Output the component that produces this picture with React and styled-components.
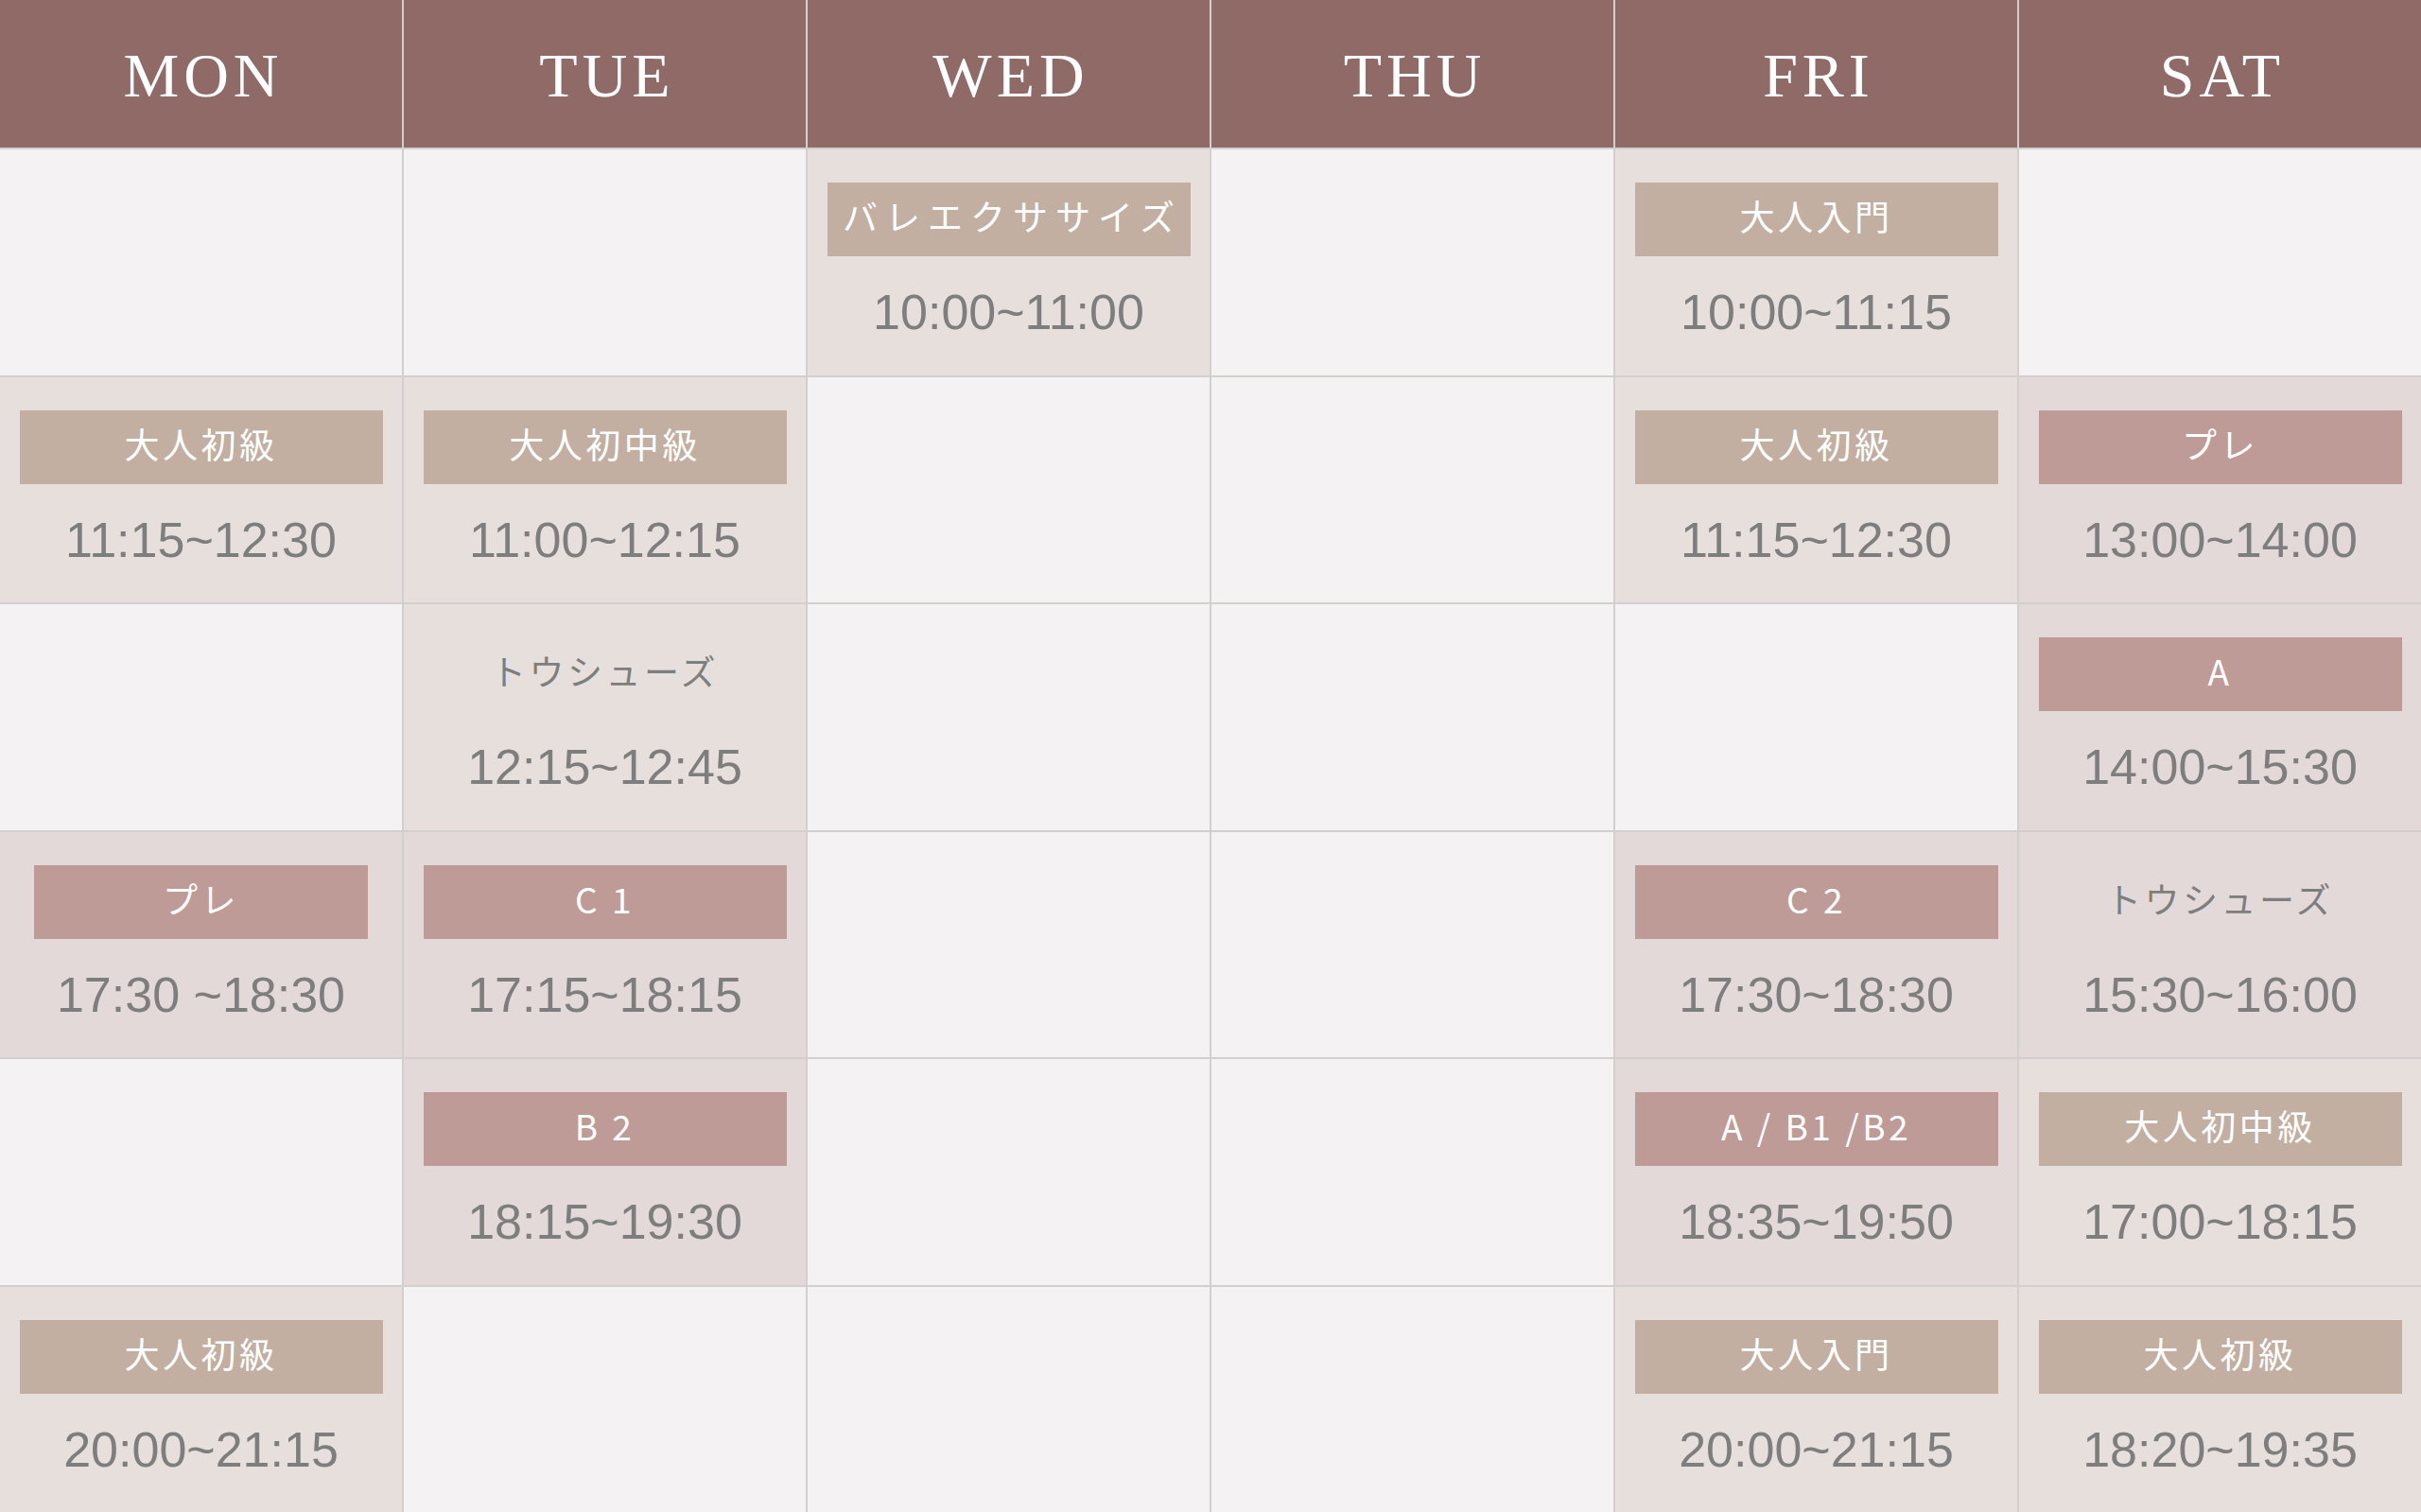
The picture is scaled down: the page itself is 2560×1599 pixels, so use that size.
import React from "react";
import styled, { createGlobalStyle, css } from "styled-components";

const GlobalStyle = createGlobalStyle`
  html, body {
    margin: 0;
    padding: 0;
    background: #f4f2f3;
    overflow: hidden;
  }
  * {
    box-sizing: border-box;
  }
`;

const colors = {
  header: "#8f6a67",
  line: "#d3cfcf",
  empty: "#f4f2f3",
  cellTan: "#e6dfdc",
  cellPink: "#e3d9d8",
  boxTan: "#c2afa1",
  boxPink: "#bf9b97",
  time: "#7e7e7e",
};

const Table = styled.div`
  width: 100vw;
  height: 100vh;
  display: grid;
  grid-template-columns: repeat(6, 1fr);
  grid-template-rows: 156px repeat(6, 1fr);
  gap: 2px;
  background: ${colors.line};
`;

const DayHead = styled.div`
  background: ${colors.header};
  color: #ffffff;
  display: flex;
  align-items: center;
  justify-content: center;
  font-family: "Liberation Serif", "Times New Roman", serif;
  font-size: 66px;
  letter-spacing: 5px;
  padding-left: 5px;
  padding-top: 4px;
`;

const Cell = styled.div`
  background: ${(p) =>
    p.$tone === "pink"
      ? colors.cellPink
      : p.$tone === "tan"
      ? colors.cellTan
      : colors.empty};
  display: flex;
  flex-direction: column;
  align-items: center;
  padding-top: 35px;
`;

const ClassBox = styled.div`
  width: ${(p) => (p.$narrow ? "353px" : "384px")};
  height: 78px;
  display: flex;
  align-items: center;
  justify-content: center;
  padding-bottom: 7px;
  background: ${(p) =>
    p.$tone === "pink" ? colors.boxPink : p.$tone === "tan" ? colors.boxTan : "transparent"};
  color: ${(p) => (p.$tone === "plain" ? colors.time : "#ffffff")};
  font-family: "Noto Sans CJK JP", "Noto Sans", sans-serif;
  font-weight: 400;
  font-size: 37px;
  letter-spacing: ${(p) => (p.$wide ? "8px" : "3.5px")};
  line-height: 1;
  ${(p) =>
    p.$wide &&
    css`
      padding-left: 8px;
    `}
`;

const Time = styled.div`
  margin-top: 33px;
  font-family: "Liberation Sans", Arial, sans-serif;
  font-size: 52px;
  line-height: 52px;
  color: ${colors.time};
  white-space: pre;
`;

const days = ["MON", "TUE", "WED", "THU", "FRI", "SAT"];

const rows = [
  [
    null,
    null,
    { label: "バレエクササイズ", tone: "tan", time: "10:00~11:00", wide: true },
    null,
    { label: "大人入門", tone: "tan", time: "10:00~11:15" },
    null,
  ],
  [
    { label: "大人初級", tone: "tan", time: "11:15~12:30" },
    { label: "大人初中級", tone: "tan", time: "11:00~12:15" },
    null,
    null,
    { label: "大人初級", tone: "tan", time: "11:15~12:30" },
    { label: "プレ", tone: "pink", time: "13:00~14:00" },
  ],
  [
    null,
    { label: "トウシューズ", tone: "plain", bg: "tan", time: "12:15~12:45" },
    null,
    null,
    null,
    { label: "A", tone: "pink", time: "14:00~15:30" },
  ],
  [
    { label: "プレ", tone: "pink", time: "17:30 ~18:30", narrow: true },
    { label: "C 1", tone: "pink", time: "17:15~18:15" },
    null,
    null,
    { label: "C 2", tone: "pink", time: "17:30~18:30" },
    { label: "トウシューズ", tone: "plain", bg: "pink", time: "15:30~16:00" },
  ],
  [
    null,
    { label: "B 2", tone: "pink", time: "18:15~19:30" },
    null,
    null,
    { label: "A / B1 /B2", tone: "pink", time: "18:35~19:50" },
    { label: "大人初中級", tone: "tan", time: "17:00~18:15" },
  ],
  [
    { label: "大人初級", tone: "tan", time: "20:00~21:15" },
    null,
    null,
    null,
    { label: "大人入門", tone: "tan", time: "20:00~21:15" },
    { label: "大人初級", tone: "tan", time: "18:20~19:35" },
  ],
];

function Lesson({ item }) {
  if (!item) return <Cell />;
  return (
    <Cell $tone={item.bg || item.tone}>
      <ClassBox $tone={item.tone} $narrow={item.narrow} $wide={item.wide}>
        {item.label}
      </ClassBox>
      <Time>{item.time}</Time>
    </Cell>
  );
}

export default function App() {
  return (
    <>
      <GlobalStyle />
      <Table>
        {days.map((d) => (
          <DayHead key={d}>{d}</DayHead>
        ))}
        {rows.map((row, r) =>
          row.map((item, c) => <Lesson key={`${r}-${c}`} item={item} />)
        )}
      </Table>
    </>
  );
}
